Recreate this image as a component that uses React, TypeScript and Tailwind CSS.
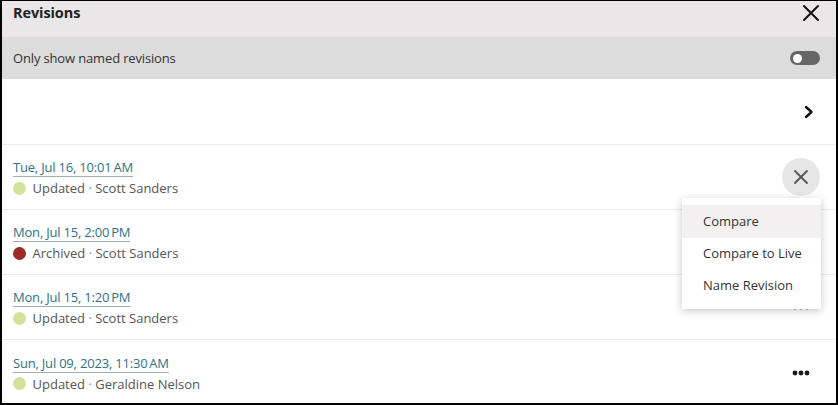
import React from "react";

const rows = [
  { date: "Tue, Jul 16, 10:01\u2009AM", status: "Updated", color: "#d3e29a", user: "Scott Sanders", action: "close" },
  { date: "Mon, Jul 15, 2:00\u2009PM", status: "Archived", color: "#9b2d26", user: "Scott Sanders", action: "none" },
  { date: "Mon, Jul 15, 1:20\u2009PM", status: "Updated", color: "#d3e29a", user: "Scott Sanders", action: "dots" },
  { date: "Sun, Jul 09, 2023, 11:30\u2009AM", status: "Updated", color: "#d3e29a", user: "Geraldine Nelson", action: "dots" },
];

function Dots() {
  return (
    <svg width="18" height="6" viewBox="0 0 18 6">
      <circle cx="3" cy="3" r="2.4" fill="#1a1a1a" />
      <circle cx="9" cy="3" r="2.4" fill="#1a1a1a" />
      <circle cx="15" cy="3" r="2.4" fill="#1a1a1a" />
    </svg>
  );
}

export default function App() {
  return (
    <div
      className="relative w-[838px] h-[405px] overflow-hidden bg-white border-l-2 border-r-2 border-b-2 border-t border-black text-[#3a3a3a]"
      style={{ fontFamily: '"Open Sans", "Noto Sans", sans-serif' }}
    >
      <div className="h-[36px] bg-[#e9e7e8] flex items-center justify-between pl-[11px] pr-[16px]">
        <span className="text-[14.5px] font-bold text-[#222] leading-none -mt-[12px] tracking-[-0.1px]">Revisions</span>
        <svg width="18" height="18" viewBox="0 0 18 18" className="-mt-[12px]">
          <path d="M2 2 L16 16 M16 2 L2 16" stroke="#111" strokeWidth="2" strokeLinecap="round" />
        </svg>
      </div>
      <div className="h-[42px] bg-[#dcdcdc] flex items-center justify-between pl-[11px] pr-[16px]">
        <span className="text-[13px] text-[#333] tracking-[-0.15px] mt-[2px]">Only show named revisions</span>
        <div className="w-[30px] h-[14px] rounded-full bg-[#666666] flex items-center pl-[3px]">
          <div className="w-[9px] h-[9px] rounded-full bg-white" />
        </div>
      </div>
      <div className="h-[66px] border-b border-[#ebebeb] flex items-center justify-end pr-[22px]">
        <svg width="10" height="14" viewBox="0 0 10 14">
          <path d="M2 2 L7.5 7 L2 12" stroke="#111" strokeWidth="2.4" fill="none" strokeLinecap="round" strokeLinejoin="round" />
        </svg>
      </div>
      {rows.map((r, i) => (
        <div
          key={i}
          className={`h-[65px] flex items-center justify-between pl-[11px] pr-[16px] ${i < rows.length - 1 ? "border-b border-[#ebebeb]" : ""}`}
        >
          <div className="flex flex-col gap-[3px] mt-[1px]">
            <span className="text-[13px] tracking-[-0.2px] text-[#2e7386] underline decoration-[#a5aeb2] underline-offset-[4px] leading-[18px]">
              {r.date}
            </span>
            <div className="flex items-center gap-[7px] text-[13px] text-[#555] leading-[18px]">
              <span className="w-[13px] h-[13px] shrink-0 rounded-full -ml-[0.5px]" style={{ backgroundColor: r.color }} />
              <span>
                {r.status} <span className="text-[#888]">·</span> {r.user}
              </span>
            </div>
          </div>
          {r.action === "close" && (
            <div className="w-[38px] h-[38px] rounded-full bg-[#e6e6e6] flex items-center justify-center">
              <svg width="16" height="16" viewBox="0 0 16 16">
                <path d="M2 2 L14 14 M14 2 L2 14" stroke="#555" strokeWidth="1.8" strokeLinecap="round" />
              </svg>
            </div>
          )}
          {r.action === "dots" && (
            <div className="mr-[10px]">
              <Dots />
            </div>
          )}
        </div>
      ))}
      <div className="absolute left-[680px] top-[197px] w-[139px] bg-white shadow-[0_2px_8px_rgba(0,0,0,0.22)] py-[7px] text-[13px] text-[#333]">
        <div className="h-[33px] bg-[#f2f0f1] flex items-center pl-[21px]">Compare</div>
        <div className="h-[32px] flex items-center pl-[21px]">Compare to Live</div>
        <div className="h-[32px] flex items-center pl-[21px]">Name Revision</div>
      </div>
    </div>
  );
}
